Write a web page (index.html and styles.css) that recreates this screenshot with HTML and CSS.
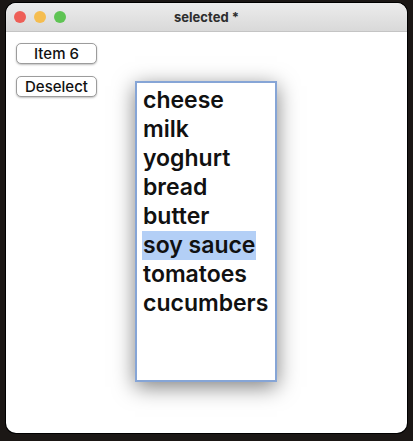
FILE: index.html
```html
<!DOCTYPE html>
<html>
<head>
<meta charset="utf-8">
<link rel="stylesheet" href="styles.css">
</head>
<body>
<div class="window">
  <div class="titlebar">
    <div class="lights">
      <span class="light red"></span>
      <span class="light yellow"></span>
      <span class="light green"></span>
    </div>
    <div class="title">selected *</div>
  </div>
  <div class="content">
    <div class="buttons">
      <button class="btn">Item 6</button>
      <button class="btn">Deselect</button>
    </div>
    <div class="listbox">
      <div class="item">cheese</div>
      <div class="item">milk</div>
      <div class="item">yoghurt</div>
      <div class="item">bread</div>
      <div class="item">butter</div>
      <div class="item"><span class="sel">soy sauce</span></div>
      <div class="item">tomatoes</div>
      <div class="item">cucumbers</div>
    </div>
  </div>
</div>
</body>
</html>
```
FILE: styles.css
```css
html, body {
  margin: 0;
  padding: 0;
}
body {
  width: 413px;
  height: 441px;
  background: #1b1715;
  overflow: hidden;
  font-family: Inter, "Liberation Sans", sans-serif;
}
.window {
  position: relative;
  margin: 3px 0 0 6px;
  width: 401px;
  height: 430px;
  border-radius: 10px;
  background: #ffffff;
  overflow: hidden;
  box-shadow: 0 0 0 1px #000;
}
.titlebar {
  height: 28px;
  background: linear-gradient(#ececec, #d9d9d9);
  border-bottom: 1px solid #c4c4c4;
  display: flex;
  align-items: center;
  justify-content: center;
  position: relative;
}
.lights {
  position: absolute;
  left: 8px;
  top: 8px;
  display: flex;
  gap: 8px;
}
.light {
  width: 12px;
  height: 12px;
  border-radius: 50%;
}
.red { background: #ee5f57; }
.yellow { background: #f5bd4f; }
.green { background: #5fc454; }
.title {
  font-size: 13px;
  font-weight: 700;
  color: #2e2e2e;
}
.content {
  display: flex;
  padding: 11px 0 0 10px;
}
.buttons {
  display: flex;
  flex-direction: column;
  gap: 12px;
  width: 81px;
}
.btn {
  height: 21px;
  width: 81px;
  padding: 0;
  background: #fff;
  border: 1px solid #9c9c9c;
  border-radius: 5px;
  box-shadow: 0 1px 2px rgba(0,0,0,0.25);
  font-family: Inter, "Liberation Sans", sans-serif;
  font-size: 15px;
  font-weight: 500;
  color: #111;
}
.listbox {
  margin-left: 38px;
  margin-top: 38px;
  width: 132px;
  height: 294px;
  border: 2px solid #86a5d6;
  background: #fff;
  box-shadow: 0 5px 20px rgba(0,0,0,0.5);
  padding: 3px 0 0 6px;
}
.item {
  font-family: Inter, "Liberation Sans", sans-serif;
  font-size: 23px;
  font-weight: 600;
  line-height: 29px;
  color: #111;
  white-space: nowrap;
}
.sel {
  background: #b3cff6;
  display: inline-block;
  padding: 0 1px;
  margin-left: -1px;
}
```
